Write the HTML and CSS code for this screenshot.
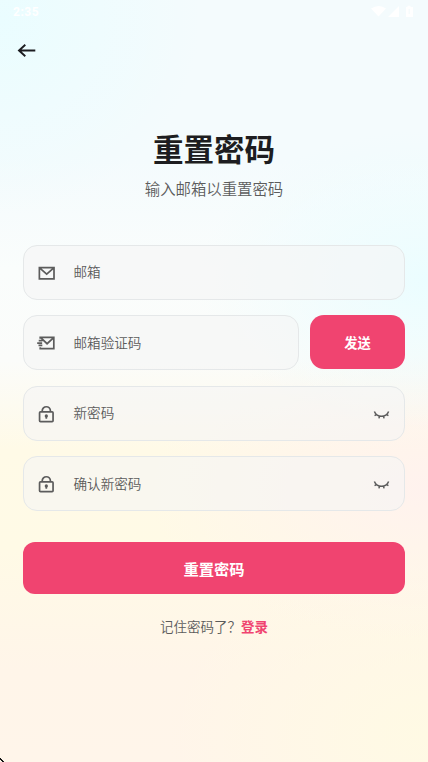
FILE: index.html
```html
<!DOCTYPE html>
<html lang="zh-CN">
<head>
<meta charset="utf-8">
<title>重置密码</title>
<link rel="stylesheet" href="styles.css">
</head>
<body>
<svg class="sprite" aria-hidden="true">
  <symbol id="mail" viewBox="0 0 20 20"><path d="M2.500 4.800h15.400v11.800H2.500zM3 5.300l7.200 6.400 7.200-6.400"/></symbol>
  <symbol id="mail-fast" viewBox="0 0 20 20"><path d="M3.400 6V4.600h14.300v11.800H3.400v-1.400M4.200 5.100l6.400 6.200 6.700-6.200M1.800 8.100h4M.2 10.700h5.200M1.600 13.100h4"/></symbol>
  <symbol id="lock" viewBox="0 0 20 20"><rect x="2.700" y="8.200" width="14.200" height="10.400" rx="1"/><path d="M5.400 8c0-6.800 8.800-6.800 8.800 0M9.800 12.500v3"/><circle class="dot" cx="9.800" cy="12.500" r="1.700"/></symbol>
  <symbol id="eye" viewBox="0 0 20 20"><path d="M2.500 7.900C4 11.500 6.700 13 10 13s6-1.500 7.500-5.100M4.700 11.100l-2 1.200M7.900 12.800l-.6 2.300M12.100 12.800l.6 2.300M15.300 11.100l2 1.200"/></symbol>
</svg>
<main class="screen">
  <header class="status">
    <span class="time">2:35</span>
    <svg class="signals" viewBox="0 0 46 14"><path d="M0 3.500Q8-1.500 15 3.500L7.500 11.500zM17 12 28 1v11z"/><path fill-rule="evenodd" d="M35 2h1.500V.8h3V2H42v10h-7zM37.600 4v5h1.200V4z"/></svg>
  </header>
  <nav class="nav"><svg class="back" viewBox="0 0 20 16"><path d="M18.300 8.500H2M8.300 2.800 2 8.500l6.300 5.700"/></svg></nav>
  <h1 class="title">重置密码</h1>
  <p class="subtitle">输入邮箱以重置密码</p>
  <form class="form">
    <div class="field"><svg class="icon"><use href="#mail"/></svg><span class="label">邮箱</span></div>
    <div class="row">
      <div class="field"><svg class="icon"><use href="#mail-fast"/></svg><span class="label">邮箱验证码</span></div>
      <button class="send" type="button">发送</button>
    </div>
    <div class="field"><svg class="icon"><use href="#lock"/></svg><span class="label">新密码</span><svg class="icon eye"><use href="#eye"/></svg></div>
    <div class="field"><svg class="icon"><use href="#lock"/></svg><span class="label">确认新密码</span><svg class="icon eye"><use href="#eye"/></svg></div>
    <button class="submit" type="button">重置密码</button>
  </form>
  <p class="footer">记住密码了？<a class="login">登录</a></p>
  <svg class="corner" viewBox="0 0 4 4"><path d="M0 0h1v1h1v1h1v1h1v1H2V3H1V2H0z"/></svg>
</main>
</body>
</html>
```
FILE: styles.css
```css
* { box-sizing: border-box; }
body { margin: 0; font-family: "Noto Sans CJK SC", sans-serif; font-weight: 350; }
.sprite { position: absolute; width: 0; height: 0; }
.screen {
  position: relative;
  height: 762px;
  overflow: hidden;
  padding: 0 23px;
  background:
    radial-gradient(ellipse 230px 150px at 100% 280px, #ebfdff, #ebfdff00),
    radial-gradient(ellipse 200px 190px at 0 20px, #eafdff, #eafdff00),
    radial-gradient(ellipse 280px 150px at 100% 490px, #fff2ee, #fff2ee00),
    radial-gradient(ellipse 260px 180px at 100% 735px, #fffae4, #fffae400),
    linear-gradient(#f4fbfd 0, #f4fbfd 160px, #fafdfc 270px, #fbfcfa 360px, #fffae7 450px, #fffae6 550px, #fff5e9 670px, #fff5ea);
}
.status { display: flex; justify-content: space-between; height: 24px; padding: 5px 0 0; }
.time { margin-left: -10px; font: bold 12px/14px Roboto, sans-serif; color: #fff; letter-spacing: .5px; }
.signals { width: 46px; height: 14px; margin-right: -12px; fill: #fff; }
.nav { height: 52px; margin-left: -6px; padding-top: 18px; }
.back { display: block; width: 20px; height: 16px; fill: none; stroke: #1c1c20; stroke-width: 1.9; }
.title { margin: 50px 0 0; font-size: 30.5px; line-height: 44px; font-weight: 700; color: #1d1d20; text-align: center; }
.subtitle { margin: 7px 0 0; font-size: 15.4px; line-height: 23px; color: #5c5c5c; text-align: center; }
.form { display: flex; flex-direction: column; gap: 15.5px; margin-top: 44.5px; }
.field { display: flex; flex: 1; align-items: center; min-height: 55px; height: 55px; padding: 0 13px; border: 1px solid #e5e8e9; border-radius: 14px; background: rgba(245, 245, 245, .6); }
.icon { width: 19px; height: 19px; fill: none; stroke: #5c5c5c; stroke-width: 1.8; }
.dot { fill: #5c5c5c; stroke: none; }
.eye { margin-left: auto; stroke-width: 1.6; }
.label { margin-left: 17.5px; font-size: 13.6px; line-height: 20px; color: #5c5c5c; position: relative; top: -1px; }
.row { display: flex; gap: 11px; }
button { padding: 0; border: 0; background: #f04470; color: #fff; font-family: inherit; font-weight: 700; }
.send { width: 95px; height: 53.5px; padding-top: 1px; border-radius: 14px; font-size: 13.3px; }
.submit { height: 52px; margin-top: 15px; border-radius: 12px; font-size: 15.3px; }
.footer { margin: 22.5px 0 0; font-size: 13.5px; line-height: 20px; text-align: center; color: #5c5c5c; }
.login { font-weight: 700; color: #f04470; }
.corner { position: absolute; left: 0; bottom: 0; width: 4px; height: 4px; fill: #111; }
```
